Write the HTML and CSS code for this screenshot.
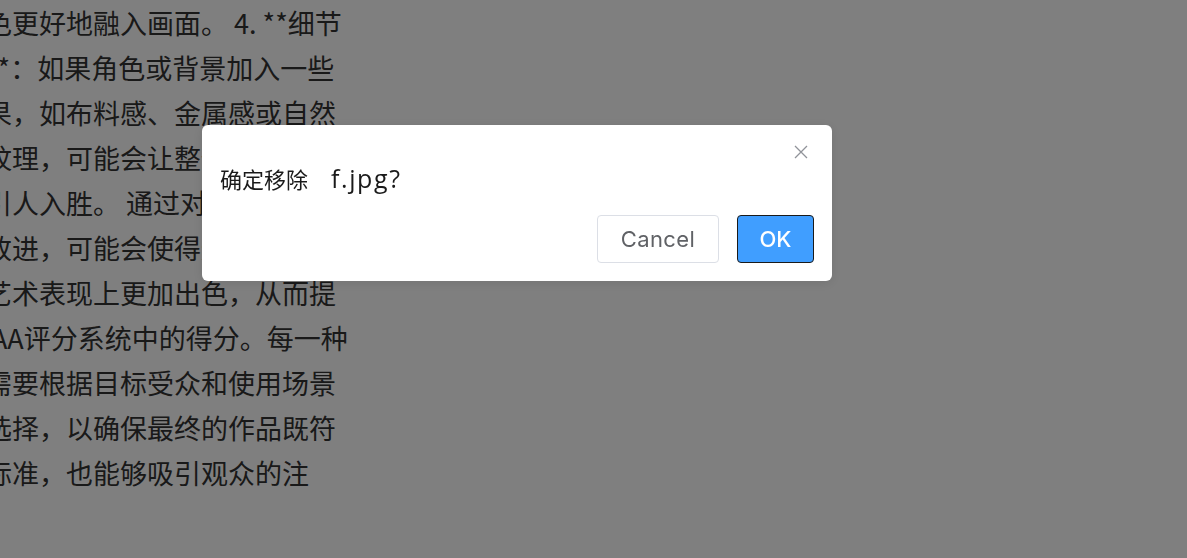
FILE: index.html
```html
<!DOCTYPE html>
<html lang="zh-CN">

<head>
  <meta charset="UTF-8">
  <meta name="viewport" content="width=device-width, initial-scale=1.0">
  <title>确定移除</title>
  <link rel="stylesheet" href="styles.css">
</head>

<body>
  <div class="article">
    <div class="line">色更好地融入画面。 4. **细节</div>
    <div class="line">**：如果角色或背景加入一些</div>
    <div class="line">果，如布料感、金属感或自然</div>
    <div class="line">纹理，可能会让整体作品更加</div>
    <div class="line">引人入胜。 通过对这些方面的</div>
    <div class="line">改进，可能会使得这幅作品在</div>
    <div class="line">艺术表现上更加出色，从而提</div>
    <div class="line line-aa">AA评分系统中的得分。每一种</div>
    <div class="line">需要根据目标受众和使用场景</div>
    <div class="line">选择，以确保最终的作品既符</div>
    <div class="line">标准，也能够吸引观众的注</div>
  </div>

  <div class="mask">
    <div class="message-box">
      <button class="close" aria-label="关闭">
        <svg width="14" height="14" viewBox="0 0 14 14">
          <path d="M1 1 L13 13 M13 1 L1 13" stroke="#909399" stroke-width="1.3" fill="none" />
        </svg>
      </button>
      <div class="message-title">确定移除<span class="file-name">f.jpg?</span></div>
      <div class="message-btns">
        <button class="btn btn-cancel">Cancel</button>
        <button class="btn btn-ok">OK</button>
      </div>
    </div>
  </div>
</body>

</html>
```

FILE: styles.css
```css
body {
  margin: 0;
  background-color: white;
  font-family: 'Noto Sans CJK SC', 'Noto Sans', sans-serif;
  overflow: hidden;
}

.article {
  width: 380px;
  margin-left: -15px;
  color: #333;
  font-size: 27px;
  line-height: 45px;
}

.line {
  white-space: nowrap;
}

.line-aa {
  padding-left: 6px;
}

.mask {
  position: fixed;
  inset: 0;
  background-color: rgba(0, 0, 0, 0.5);
  padding: 125px 0 0 202px;
}

.message-box {
  position: relative;
  width: 630px;
  box-sizing: border-box;
  padding: 20px 18px 18px 18px;
  background-color: white;
  border-radius: 6px;
  box-shadow: 0 2px 12px rgba(0, 0, 0, 0.1);
}

.close {
  position: absolute;
  top: 20px;
  right: 24px;
  width: 14px;
  height: 14px;
  padding: 0;
  border: none;
  background: none;
  cursor: pointer;
  display: flex;
}

.message-title {
  margin-top: 18px;
  font-size: 22px;
  line-height: 30px;
  color: #1a1a1a;
}

.file-name {
  margin-left: 23px;
  font-family: 'Open Sans', 'Noto Sans', sans-serif;
  font-size: 25px;
  letter-spacing: 1.6px;
}

.message-btns {
  display: flex;
  justify-content: flex-end;
  gap: 18px;
  margin-top: 22px;
}

.btn {
  height: 48px;
  box-sizing: border-box;
  border-radius: 4px;
  font-family: Inter, 'Noto Sans', sans-serif;
  font-size: 22px;
  cursor: pointer;
}

.btn-cancel {
  width: 122px;
  border: 1px solid #dcdfe6;
  background-color: white;
  color: #606266;
  letter-spacing: 0.4px;
}

.btn-ok {
  width: 77px;
  border: 1px solid #1a1a1a;
  background-color: #409eff;
  color: white;
  font-weight: 500;
}
```
